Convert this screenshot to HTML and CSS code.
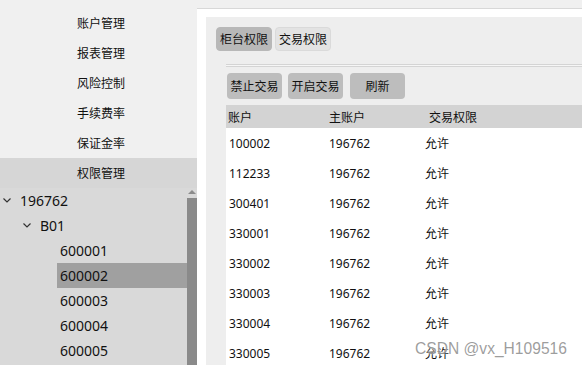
FILE: index.html
```html
<!DOCTYPE html>
<html lang="zh-CN">
<head>
    <meta charset="UTF-8">
    <meta name="viewport" content="width=device-width, initial-scale=1.0">
    <title>权限管理</title>
    <link rel="stylesheet" href="styles.css">
</head>
<body>
    <div class="app">
        <aside class="sidebar">
            <ul class="menu">
                <li>账户管理</li>
                <li>报表管理</li>
                <li>风险控制</li>
                <li>手续费率</li>
                <li>保证金率</li>
                <li class="active">权限管理</li>
            </ul>

            <div class="tree-wrap">
                <ul class="tree">
                    <li class="node lvl0">
                        <svg class="chev" width="8" height="5" viewBox="0 0 8 5"><polyline points="0.5,0.5 4,4 7.5,0.5" fill="none" stroke="#333" stroke-width="1.2"/></svg>
                        <span>196762</span>
                    </li>
                    <li class="node lvl1">
                        <svg class="chev" width="8" height="5" viewBox="0 0 8 5"><polyline points="0.5,0.5 4,4 7.5,0.5" fill="none" stroke="#333" stroke-width="1.2"/></svg>
                        <span>B01</span>
                    </li>
                    <li class="node leaf">600001</li>
                    <li class="node leaf selected">600002</li>
                    <li class="node leaf">600003</li>
                    <li class="node leaf">600004</li>
                    <li class="node leaf">600005</li>
                </ul>
                <div class="scrollbar">
                    <div class="arrow-up"></div>
                    <div class="thumb"></div>
                </div>
            </div>
        </aside>

        <main class="main">
            <div class="frame">
                <div class="panel">
                    <div class="tabs">
                        <button class="tab active">柜台权限</button>
                        <button class="tab">交易权限</button>
                    </div>

                    <div class="panel-body">
                        <div class="sep"></div>
                        <div class="actions">
                            <button class="btn">禁止交易</button>
                            <button class="btn">开启交易</button>
                            <button class="btn">刷新</button>
                        </div>

                        <table class="grid">
                            <thead>
                                <tr>
                                    <th class="c1">账户</th>
                                    <th class="c2">主账户</th>
                                    <th class="c3">交易权限</th>
                                </tr>
                            </thead>
                            <tbody id="grid-body"></tbody>
                        </table>
                    </div>
                </div>
            </div>
        </main>

        <div class="watermark">CSDN @vx_H109516</div>
    </div>

    <script>
        const accounts = ["100002", "112233", "300401", "330001", "330002", "330003", "330004", "330005"];
        const gridBody = document.getElementById('grid-body');

        gridBody.innerHTML = accounts.map(acc => `
            <tr>
                <td class="c1">${acc}</td>
                <td class="c2">196762</td>
                <td class="c3">允许</td>
            </tr>
        `).join('');
    </script>
</body>
</html>
```

FILE: styles.css
```css
body {
    margin: 0;
    padding: 0;
    font-family: "Noto Sans", "Noto Sans CJK SC", sans-serif;
    font-size: 12px;
    color: #111;
    background-color: #f0f0f0;
    overflow: hidden;
}
ul {
    list-style: none;
    margin: 0;
    padding: 0;
}
.app {
    display: flex;
    width: 582px;
    height: 365px;
    overflow: hidden;
    position: relative;
}

/* left side */
.sidebar {
    width: 197px;
    flex-shrink: 0;
    display: flex;
    flex-direction: column;
    background-color: #f0f0f0;
}
.menu {
    padding-top: 8px;
}
.menu li {
    height: 30px;
    line-height: 32px;
    padding-left: 77px;
}
.menu li.active {
    background-color: #d6d6d6;
}
.tree-wrap {
    flex: 1;
    display: flex;
    background-color: #d9d9d9;
}
.tree {
    width: 187px;
}
.tree .node {
    height: 25px;
    display: flex;
    align-items: center;
    font-size: 14px;
}
.tree .lvl0 {
    padding-left: 3px;
}
.tree .lvl1 {
    padding-left: 23px;
}
.tree .chev {
    margin-right: 9px;
}
.tree .leaf {
    margin-left: 57px;
    padding-left: 3px;
}
.tree .leaf.selected {
    background-color: #a0a0a0;
}
.scrollbar {
    width: 10px;
    display: flex;
    flex-direction: column;
}
.arrow-up {
    height: 10px;
    position: relative;
}
.arrow-up::after {
    content: "";
    position: absolute;
    left: 1px;
    top: 2px;
    border-left: 4px solid transparent;
    border-right: 4px solid transparent;
    border-bottom: 4px solid #8c8c8c;
}
.thumb {
    flex: 1;
    background-color: #8a8a8a;
}

/* right side */
.main {
    flex: 1;
    padding-top: 8px;
    min-width: 0;
}
.frame {
    height: 100%;
    background-color: #fff;
    border-top: 1px solid #d8d8d8;
    padding: 8px 0 0 9px;
    box-sizing: border-box;
}
.panel {
    height: 100%;
    background-color: #eeeeee;
    padding: 10px 0 0 10px;
    box-sizing: border-box;
}
.tabs {
    display: flex;
    gap: 3px;
}
.tab {
    height: 24px;
    padding: 0 3px;
    font-family: inherit;
    font-size: 12px;
    color: #111;
    border: 1px solid #dadada;
    border-radius: 4px;
    background-color: #e3e3e3;
}
.tab.active {
    background-color: #b8b8b8;
    border-color: #b8b8b8;
}
.panel-body {
    padding-left: 10px;
}
.sep {
    margin-top: 13px;
    height: 1px;
    border-top: 1px solid #d4d4d4;
    border-bottom: 1px solid #d4d4d4;
    background-color: #f6f6f6;
}
.actions {
    display: flex;
    gap: 6px;
    margin-top: 6px;
    padding-left: 1px;
}
.btn {
    width: 55px;
    height: 26px;
    padding: 0;
    font-family: inherit;
    font-size: 12px;
    color: #111;
    border: none;
    border-radius: 4px;
    background-color: #bdbdbd;
}
.btn:last-child {
    margin-left: 1px;
}
.grid {
    margin-top: 6px;
    width: 100%;
    border-collapse: collapse;
    background-color: #fff;
}
.grid th {
    height: 23px;
    padding: 0;
    font-weight: normal;
    text-align: left;
    background-color: #d3d3d3;
}
.grid td {
    height: 30px;
    padding: 0;
}
.grid .c1 {
    width: 100px;
}
.grid th.c1 {
    padding-left: 2px;
}
.grid td.c1 {
    padding-left: 3px;
}
.grid .c2 {
    width: 96px;
}
.grid th.c3 {
    padding-left: 4px;
}

.watermark {
    position: absolute;
    left: 415px;
    top: 339px;
    font-family: "Liberation Sans", Arial, sans-serif;
    font-size: 15.6px;
    line-height: 20px;
    color: rgba(140, 140, 140, 0.85);
    text-shadow: 0 0 2px #fff;
    pointer-events: none;
}
```
